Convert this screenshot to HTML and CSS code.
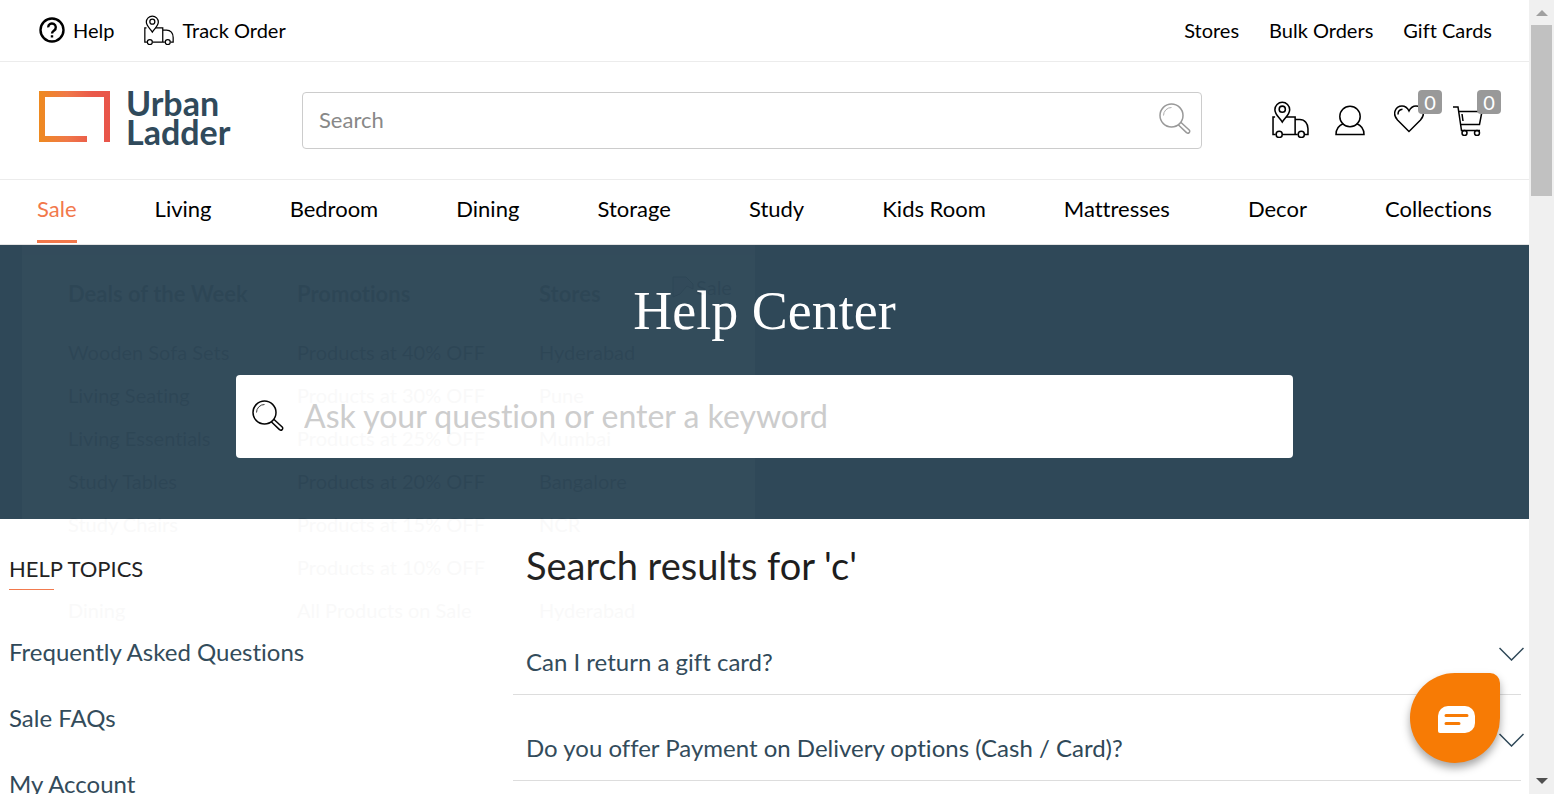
FILE: index.html
```html
<!DOCTYPE html>
<html lang="en">
<head>
<meta charset="utf-8">
<title>Help Center - Urban Ladder</title>
<link rel="stylesheet" href="styles.css">
</head>
<body>
<svg class="defs" aria-hidden="true">
  <defs>
    <symbol id="truck" viewBox="0 0 36 36">
      <path d="M3 15.500H1V32.500H3.500M10.500 32.500H25M8 15.500H22.500V32.500M13 15.500H22.500V18H27C32 18 35 22 35 27V32.500H32"/>
      <path d="M10 20.500C7 16 2.800 13 2.800 8.500A7.200 7.200 0 0 1 17.200 8.500C17.200 13 13 16 10 20.500Z" fill="#fff"/>
      <circle cx="10" cy="8" r="3"/><circle cx="7" cy="32.500" r="3" fill="#fff"/><circle cx="28.500" cy="32.500" r="3" fill="#fff"/>
    </symbol>
    <symbol id="lens" viewBox="0 0 32 32">
      <circle cx="12.500" cy="12.500" r="11.500"/><path d="M4.500 12.500A8 8 0 0 1 12.500 4.500" stroke-width=".8"/>
      <path d="M19 21.500L27.500 29.600A1.700 1.700 0 0 0 30.200 27L21.500 19"/>
    </symbol>
  </defs>
</svg>
<div class="window">
  <div class="page">
    <div class="topbar">
      <nav class="toplinks" aria-label="Support">
        <a href="#"><svg class="ic-help" viewBox="0 0 26 26"><circle cx="13" cy="13" r="11.500"/><path d="M9.200 10.400A3.800 3.800 0 1 1 15.200 13.400C13.600 14.600 13 15 13 16.600M13 18.300V20.600"/></svg>Help</a>
        <a href="#"><svg class="line ic-track"><use href="#truck"/></svg>Track Order</a>
      </nav>
      <nav class="toplinks" aria-label="Shop">
        <a href="#">Stores</a><a href="#">Bulk Orders</a><a href="#">Gift Cards</a>
      </nav>
    </div>
    <header class="header">
      <a class="logo" href="#">
        <svg class="logo-mark" viewBox="0 0 71 51"><defs><linearGradient id="g"><stop offset="0" stop-color="#ee8a1f"/><stop offset=".4" stop-color="#f07848"/><stop offset=".75" stop-color="#ea594a"/><stop offset="1" stop-color="#e8554a"/></linearGradient></defs><path fill="url(#g)" d="M0 0H71V51H65V6H6V45H48V51H0Z"/></svg>
        <span>Urban<br>Ladder</span>
      </a>
      <form class="search">
        <input type="search" placeholder="Search" aria-label="Search products">
        <button type="button" aria-label="Search"><svg class="line lens"><use href="#lens"/></svg></button>
      </form>
      <div class="actions">
        <a href="#" aria-label="Track order"><svg class="line ic-truck"><use href="#truck"/></svg></a>
        <a href="#" aria-label="Account"><svg class="line ic-user" viewBox="0 0 30 30"><path d="M8.500 18C3.500 20 1 24 1 29H29C29 24 26.500 20 21.500 18"/><circle cx="15" cy="11" r="10.200"/></svg></a>
        <a href="#" aria-label="Wishlist"><svg class="line ic-heart" viewBox="0 0 30 28"><path d="M15 26.500L3.500 15C-2.500 8.500 2 1 8 1C11.500 1 13.500 3 15 6C16.500 3 18.500 1 22 1C28 1 32.500 8.500 26.500 15Z"/><path d="M4 9.500C4 6.500 5.800 4.500 8.500 4.300"/></svg><span class="badge">0</span></a>
        <a href="#" aria-label="Cart"><svg class="line ic-cart" viewBox="0 0 30 30"><path d="M0 1H5L8.500 24.500H27M6 5.500H29L26.500 18.500H7.500M9 8L10 15"/><circle cx="11.500" cy="27" r="2.500"/><circle cx="24" cy="27" r="2.500"/></svg><span class="badge">0</span></a>
      </div>
    </header>
    <nav class="mainnav" aria-label="Categories">
      <a class="active" href="#">Sale</a><a href="#">Living</a><a href="#">Bedroom</a><a href="#">Dining</a><a href="#">Storage</a><a href="#">Study</a><a href="#">Kids Room</a><a href="#">Mattresses</a><a href="#">Decor</a><a href="#">Collections</a>
    </nav>
    <main class="main">
      <section class="hero">
        <h1>Help Center</h1>
        <label class="ask"><svg class="line lens"><use href="#lens"/></svg><input type="text" aria-label="Question" placeholder="Ask your question or enter a keyword"></label>
      </section>
      <div class="content">
        <aside class="topics">
          <h2>HELP TOPICS</h2>
          <a href="#">Frequently Asked Questions</a><a href="#">Sale FAQs</a><a href="#">My Account</a>
        </aside>
        <section class="results">
          <h2>Search results for 'c'</h2>
          <button type="button">Can I return a gift card?<svg class="chev" viewBox="0 0 25 14"><path d="M.500 1L12.500 13L24.500 1"/></svg></button>
          <button type="button">Do you offer Payment on Delivery options (Cash / Card)?<svg class="chev" viewBox="0 0 25 14"><path d="M.500 1L12.500 13L24.500 1"/></svg></button>
        </section>
      </div>
      <div class="megamenu">
        <div><h3>Deals of the Week</h3><p>Wooden Sofa Sets</p><p>Living Seating</p><p>Living Essentials</p><p>Study Tables</p><p>Study Chairs</p><p>&nbsp;</p><p>Dining</p></div>
        <div><h3>Promotions</h3><p>Products at 40% OFF</p><p>Products at 30% OFF</p><p>Products at 25% OFF</p><p>Products at 20% OFF</p><p>Products at 15% OFF</p><p>Products at 10% OFF</p><p>All Products on Sale</p></div>
        <div><h3>Stores</h3><p>Hyderabad</p><p>Pune</p><p>Mumbai</p><p>Bangalore</p><p>NCR</p><p>&nbsp;</p><p>Hyderabad</p></div>
        <div class="promo"><svg viewBox="0 0 22 22"><path d="M1 1H14L21 8V13L15 10L8 18L1 21Z" fill="#000" fill-opacity=".3"/></svg>Sale</div>
      </div>
    </main>
    <button class="chat" type="button" aria-label="Chat"><svg viewBox="0 0 37 27"><path fill="#fff" d="M10 0H27A10 10 0 0 1 37 10V17A10 10 0 0 1 27 27H2A2 2 0 0 1 0 25V10A10 10 0 0 1 10 0Z"/><path stroke="#f77b05" stroke-width="3" stroke-linecap="round" d="M8 9.500H29M8 17.500H21"/></svg></button>
  </div>
  <div class="scrollbar" aria-hidden="true">
    <svg class="arrow up" viewBox="0 0 12 6"><path d="M0 6L6 0L12 6Z"/></svg>
    <div class="track"><div class="thumb"></div></div>
    <svg class="arrow down" viewBox="0 0 12 6"><path d="M0 0L6 6L12 0Z"/></svg>
  </div>
</div>
</body>
</html>
```
FILE: styles.css
```css
* { box-sizing: border-box; }
body { margin: 0; font-family: Lato, "Liberation Sans", sans-serif; font-variant-ligatures: none; color: #000; background: #fff; }
a { color: inherit; text-decoration: none; }
h1, h2, h3, p { margin: 0; font-weight: 400; }
button { font: inherit; color: inherit; background: none; border: 0; padding: 0; }
input { font: inherit; border: 0; outline: 0; background: none; min-width: 0; }
svg { display: block; fill: none; flex: none; }
.defs { position: absolute; width: 0; height: 0; }
.line { stroke: #000; stroke-width: 1.5; }
.lens { width: 32px; height: 32px; }

.window { display: flex; height: 100vh; overflow: hidden; }
.page { flex: 1; min-width: 0; position: relative; overflow: hidden; }

.topbar { display: flex; justify-content: space-between; height: 62px; padding: 0 37px 2px 39px; border-bottom: 1px solid #ececec; font-size: 20px; }
.toplinks { display: flex; gap: 30px; }
.toplinks a { display: flex; align-items: center; gap: 8px; }
.ic-help { width: 26px; height: 26px; stroke: #000; stroke-width: 2.4; }
.ic-track { width: 30px; height: 30px; }

.header { display: flex; align-items: flex-start; height: 118px; padding: 30px 28px 0 39px; border-bottom: 1px solid #ececec; }
.logo { display: flex; align-items: center; gap: 16px; width: 263px; height: 49px; font-size: 34px; line-height: 29px; font-weight: 700; color: #304a5b; }
.logo-mark { width: 71px; height: 51px; }
.search { display: flex; align-items: center; flex: 1; max-width: 900px; height: 57px; padding: 0 10px 3px 14px; border: 1px solid #ccc; border-radius: 4px; font-size: 22px; }
.search input { flex: 1; }
.search input::placeholder { color: #888; opacity: 1; }
.search .line { stroke: #999; }
.actions { display: flex; align-items: flex-end; gap: 26px; height: 44px; margin-left: auto; }
.actions a { position: relative; }
.ic-truck { width: 37px; height: 37px; margin-bottom: -2px; }
.ic-user { width: 30px; height: 31px; }
.ic-heart { width: 30px; height: 28px; }
.ic-cart { width: 30px; height: 30px; }
.actions a:nth-child(3) { padding: 0 3px 3px; }
.actions a:nth-child(4) { padding: 0 18px 0 0; }
.badge { position: absolute; bottom: 22px; left: 27px; width: 24px; height: 24px; border-radius: 4px; background: #999; color: #fff; font-size: 20px; line-height: 24px; text-align: center; }
.actions a:nth-child(4) .badge { left: 24px; }

.mainnav { display: flex; justify-content: space-between; height: 65px; padding: 0 37px; border-bottom: 1px solid #e4e4e4; font-size: 22px; line-height: 58px; }
.mainnav a { height: 63px; }
.mainnav .active { color: #f2784b; border-bottom: 3px solid #f2784b; }

.main { position: relative; }
.hero { height: 274px; padding: 33px 236px 0; background: #2f4858; color: #fff; text-align: center; }
.hero h1 { font-family: "Liberation Serif", serif; font-size: 54px; line-height: 66px; }
.ask { display: flex; align-items: center; gap: 18px; height: 83px; margin-top: 31px; padding: 0 16px 2px; border-radius: 4px; background: #fff; font-size: 32px; }
.ask input { flex: 1; }
.ask input::placeholder { color: #ccc; opacity: 1; }

.content { display: grid; grid-template-columns: 513px 1fr; color: #2f4858; font-size: 24px; line-height: 30px; }
.topics { display: flex; flex-direction: column; gap: 36px; padding: 35px 9px; }
.topics h2 { margin-bottom: 11px; font-size: 22px; line-height: 30px; color: #1d1d1d; padding-bottom: 6px; background: linear-gradient(#f2784b, #f2784b) left bottom / 45px 1px no-repeat; }
.results { padding: 24px 8px 0 0; }
.results h2 { padding-left: 13px; margin-bottom: 22px; font-size: 38px; line-height: 44px; color: #1d1d1d; }
.results button { display: flex; justify-content: space-between; width: 100%; height: 86px; padding: 38px 0 0 13px; border-bottom: 1px solid #ddd; text-align: left; }
.chev { width: 25px; height: 14px; margin-right: -3px; stroke: #2f4858; stroke-width: 1.5; }

.megamenu { position: absolute; top: 0; left: 22px; width: 733px; height: 549px; padding: 35px 24px 0 46px; display: grid; grid-template-columns: 229px 242px 133px 1fr; background: #fff; opacity: .02; font-size: 20px; line-height: 43px; pointer-events: none; white-space: nowrap; }
.megamenu h3 { font-size: 22px; line-height: 28px; font-weight: 700; margin-bottom: 23px; }
.promo { display: flex; gap: 2px; line-height: 14px; }
.promo svg { width: 22px; height: 22px; margin-top: -4px; stroke: #000; }

.chat { position: absolute; right: 29px; bottom: 31px; width: 90px; height: 90px; display: flex; align-items: center; justify-content: center; padding: 3px 0 0 2px; border-radius: 45px 10px 45px 45px; background: #f77b05; box-shadow: 0 5px 8px rgba(0, 0, 0, .35); }
.chat svg { width: 37px; height: 27px; }

.scrollbar { display: flex; flex-direction: column; align-items: center; width: 25px; padding: 10px 2px; background: #f0f0f0; }
.arrow { width: 12px; height: 6px; fill: #a0a0a0; }
.down { fill: #505050; }
.track { flex: 1; width: 100%; padding: 9px 0; }
.thumb { width: 21px; height: 23%; background: #c1c1c1; }
```
